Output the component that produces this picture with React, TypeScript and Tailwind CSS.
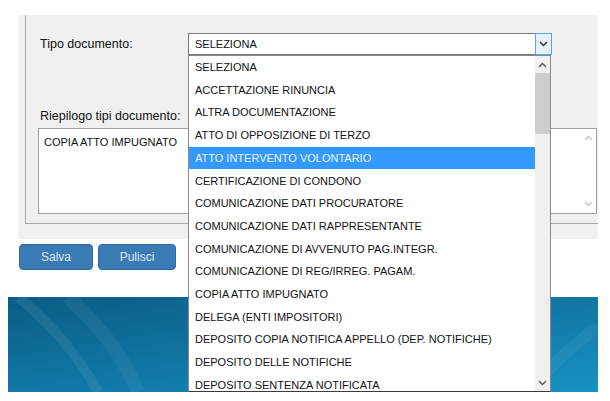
const items = [
  'SELEZIONA',
  'ACCETTAZIONE RINUNCIA',
  'ALTRA DOCUMENTAZIONE',
  'ATTO DI OPPOSIZIONE DI TERZO',
  'ATTO INTERVENTO VOLONTARIO',
  'CERTIFICAZIONE DI CONDONO',
  'COMUNICAZIONE DATI PROCURATORE',
  'COMUNICAZIONE DATI RAPPRESENTANTE',
  'COMUNICAZIONE DI AVVENUTO PAG.INTEGR.',
  'COMUNICAZIONE DI REG/IRREG. PAGAM.',
  'COPIA ATTO IMPUGNATO',
  'DELEGA (ENTI IMPOSITORI)',
  'DEPOSITO COPIA NOTIFICA APPELLO (DEP. NOTIFICHE)',
  'DEPOSITO DELLE NOTIFICHE',
  'DEPOSITO SENTENZA NOTIFICATA',
];

const Chevron = ({ up = false, color = '#555' }: { up?: boolean; color?: string }) => (
  <svg width="9" height="6" viewBox="0 0 9 6" className="block">
    <path
      d={up ? 'M1 5 L4.5 1.5 L8 5' : 'M1 1 L4.5 4.5 L8 1'}
      fill="none"
      stroke={color}
      strokeWidth="1.5"
    />
  </svg>
);

export default function App() {
  return (
    <div className="relative w-[610px] h-[401px] overflow-hidden bg-white font-['Liberation_Sans',Arial,sans-serif] text-[#111]">
      {/* form panel */}
      <div className="pt-[15px] pl-[18px]">
        <div className="w-[580px] h-[224px] bg-[#f0f0f0] pl-[7px]">
          <div className="h-[209px] border-l border-b border-[#a8a8a8]">
            <div className="flex pt-[18px] pl-[14px]">
              <div className="w-[148px] pt-[2px] text-[12.5px]">Tipo documento:</div>
              <div className="relative w-[364px] h-[22px] bg-white border border-[#7a7a7a] pl-[6px] pt-[1px] flex items-center text-[11px]">
                SELEZIONA
                <div className="absolute -right-px -top-px w-[17px] h-[22px] border border-[#5ea2e4] bg-[#e5f1fb] flex items-center justify-center">
                  <Chevron color="#333" />
                </div>
              </div>
            </div>
            <div className="pl-[14px] pt-[54px] text-[12.5px] leading-[15px]">Riepilogo tipi documento:</div>
            <div className="ml-[12px] mt-[4px] w-[559px] h-[86px] bg-white border border-[#a0a0a0] flex">
              <div className="flex-1 pl-[5px] pt-[5px] text-[11px]">COPIA ATTO IMPUGNATO</div>
              <div className="w-[15px] flex flex-col justify-between items-center py-[6px]">
                <Chevron up color="#c8c8c8" />
                <Chevron color="#c8c8c8" />
              </div>
            </div>
          </div>
        </div>
      </div>

      {/* buttons */}
      <div className="flex gap-[5px] pl-[19px] mt-[5px]">
        <button className="w-[74px] h-[26px] rounded-[4px] bg-[#3a7bb6] border border-[#2d6a9f] text-[12px] text-[#dde7f0]">
          Salva
        </button>
        <button className="w-[78px] h-[26px] rounded-[4px] bg-[#3a7bb6] border border-[#2d6a9f] text-[12px] text-[#dde7f0]">
          Pulisci
        </button>
      </div>

      {/* banner */}
      <div className="relative ml-[8px] mt-[27px] w-[590px] h-[95px] overflow-hidden bg-gradient-to-br from-[#0a5d85] to-[#1891c4]">
        <svg width="590" height="95" className="absolute inset-0">
          <path d="M10 0 Q60 40 90 95" fill="none" stroke="#ffffff" strokeOpacity="0.07" strokeWidth="10" />
          <path d="M60 0 Q110 45 130 95" fill="none" stroke="#ffffff" strokeOpacity="0.05" strokeWidth="14" />
          <path d="M520 95 Q560 50 590 30" fill="none" stroke="#ffffff" strokeOpacity="0.05" strokeWidth="12" />
        </svg>
      </div>

      {/* open dropdown list */}
      <div className="absolute left-[188px] top-[55px] w-[363px] h-[337px] bg-white border border-[#8a8a8a] border-b-[#3a3a3a] flex">
        <div className="flex-1 overflow-hidden">
          {items.map((it, i) => (
            <div
              key={it}
              className={
                i === 4
                  ? 'h-[22.7px] flex items-center pl-[6px] text-[11px] whitespace-nowrap bg-[#3399ff] text-[#eef5ff]'
                  : 'h-[22.7px] flex items-center pl-[6px] text-[11px] whitespace-nowrap'
              }
            >
              {it}
            </div>
          ))}
        </div>
        <div className="w-[15px] bg-[#f0f0f0] flex flex-col items-center">
          <div className="h-[17px] flex items-center justify-center">
            <Chevron up color="#606060" />
          </div>
          <div className="w-[15px] h-[61px] bg-[#cdcdcd]" />
          <div className="flex-1" />
          <div className="h-[17px] flex items-center justify-center">
            <Chevron color="#606060" />
          </div>
        </div>
      </div>
    </div>
  );
}
